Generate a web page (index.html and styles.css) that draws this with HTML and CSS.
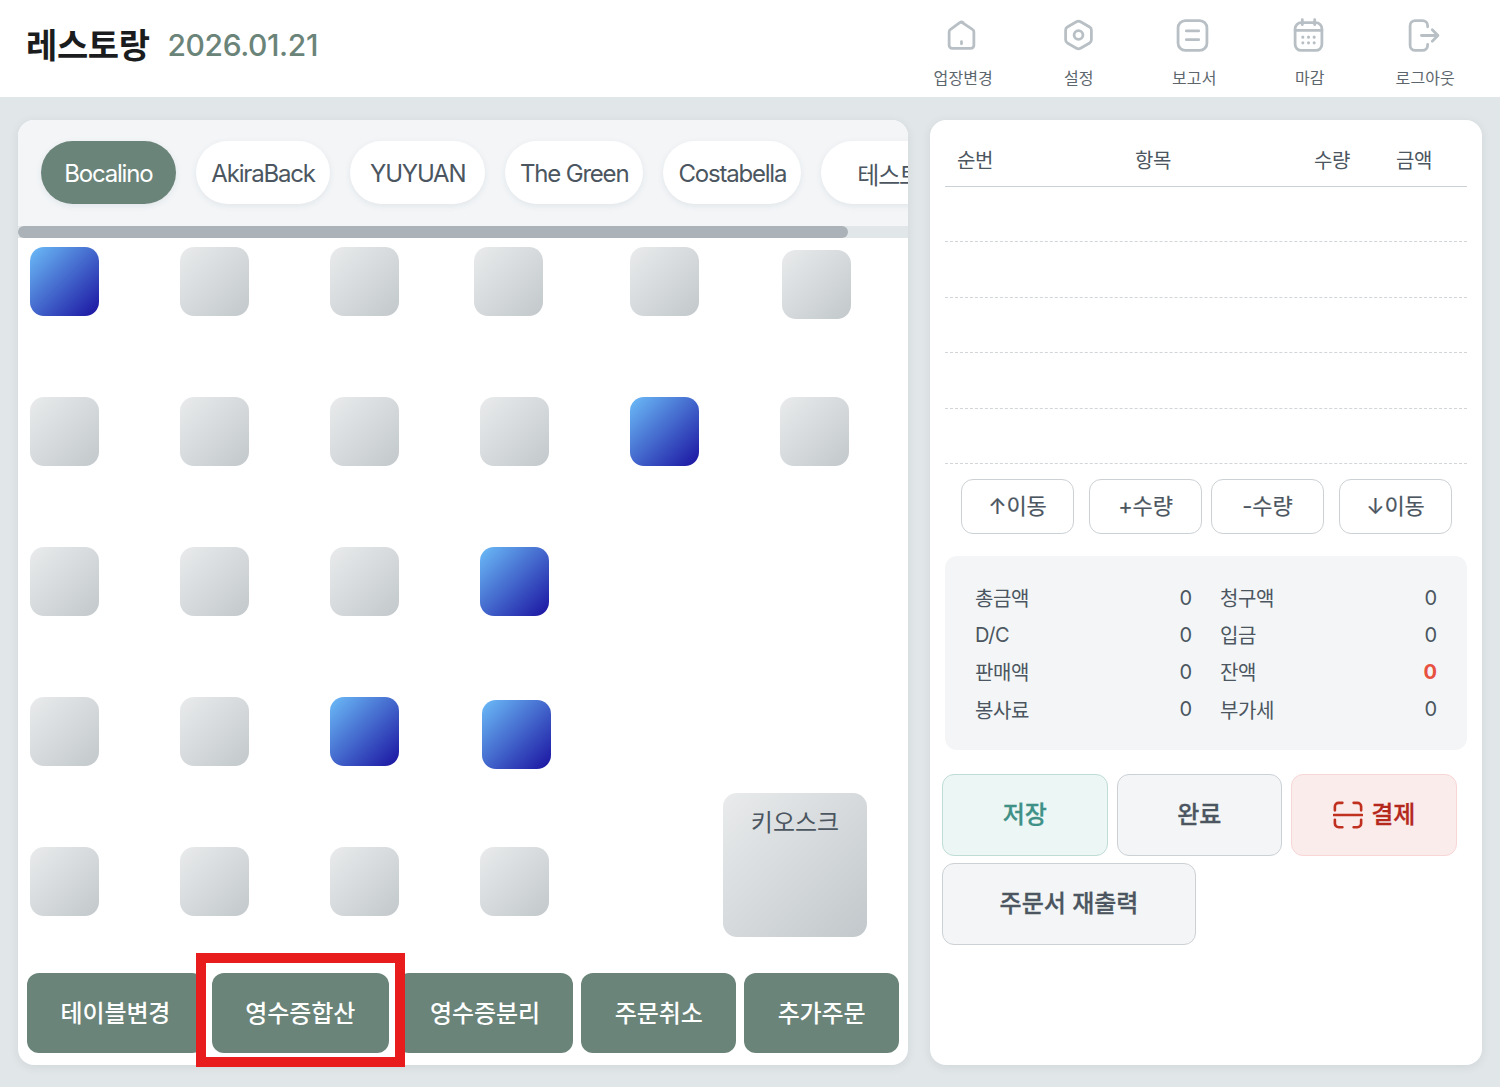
FILE: index.html
```html
<!DOCTYPE html>
<html lang="ko">
<head>
<meta charset="utf-8">
<title>레스토랑</title>
<link rel="stylesheet" href="styles.css">
</head>
<body>
<header class="top">
  <div class="brand"><span class="brand-name">레스토랑</span><span class="brand-date">2026.01.21</span></div>
  <nav class="nav">
    <a class="nav-item"><svg class="nav-icon" viewBox="0 0 32 32"><path d="M16 3.5 26.6 10.6a3 3 0 0 1 1.4 2.5V26a3 3 0 0 1-3 3H7a3 3 0 0 1-3-3V13.100a3 3 0 0 1 1.400-2.500L14.300 4a3 3 0 0 1 3.400 0"/><path d="M16 22.500v2"/></svg><span>업장변경</span></a>
    <a class="nav-item"><svg class="nav-icon nav-icon-hex" viewBox="0 0 32 32"><path d="M14 3.200a4 4 0 0 1 4 0l8.800 5.100a3.500 3.500 0 0 1 1.700 3v9.400a3.500 3.500 0 0 1-1.700 3L18 28.800a4 4 0 0 1-4 0l-8.800-5.100a3.500 3.500 0 0 1-1.700-3v-9.400a3.500 3.500 0 0 1 1.700-3z"/><circle cx="16" cy="16" r="4.300"/></svg><span>설정</span></a>
    <a class="nav-item"><svg class="nav-icon" viewBox="0 0 32 32"><rect x="2" y="2" width="28" height="29" rx="7"/><path d="M10 12h12M10 20.500h12"/></svg><span>보고서</span></a>
    <a class="nav-item"><svg class="nav-icon" viewBox="0 0 32 32"><rect x="3" y="4" width="26" height="27" rx="6"/><path d="M3 11.500h26M10 1v5M22 1v5"/><path class="dots" d="M10.500 18v.1M16 18v.1M21.500 18v.1M10.500 23.500v.1M16 23.500v.1M21.500 23.500v.1"/></svg><span>마감</span></a>
    <a class="nav-item"><svg class="nav-icon" viewBox="0 0 32 32"><path d="M20 8V7a5 5 0 0 0-5-5H8a5 5 0 0 0-5 5v19a5 5 0 0 0 5 5h7a5 5 0 0 0 5-5v-1"/><path d="M14 16.500h16M24.500 11l5.500 5.500-5.500 5.500"/></svg><span>로그아웃</span></a>
  </nav>
</header>

<main class="main">
  <section class="left">
    <div class="tabs">
      <div class="tab-list">
        <button class="tab tab-on">Bocalino</button>
        <button class="tab">AkiraBack</button>
        <button class="tab">YUYUAN</button>
        <button class="tab">The Green</button>
        <button class="tab">Costabella</button>
        <button class="tab">테스트</button>
      </div>
      <div class="track"><div class="thumb"></div></div>
    </div>
    <div class="floor">
      <div class="tile tile-on" style="left:12px;top:9px"></div>
      <div class="tile" style="left:162px;top:9px"></div>
      <div class="tile" style="left:312px;top:9px"></div>
      <div class="tile" style="left:456px;top:9px"></div>
      <div class="tile" style="left:612px;top:9px"></div>
      <div class="tile" style="left:764px;top:12px"></div>
      <div class="tile" style="left:12px;top:159px"></div>
      <div class="tile" style="left:162px;top:159px"></div>
      <div class="tile" style="left:312px;top:159px"></div>
      <div class="tile" style="left:462px;top:159px"></div>
      <div class="tile tile-on" style="left:612px;top:159px"></div>
      <div class="tile" style="left:762px;top:159px"></div>
      <div class="tile" style="left:12px;top:309px"></div>
      <div class="tile" style="left:162px;top:309px"></div>
      <div class="tile" style="left:312px;top:309px"></div>
      <div class="tile tile-on" style="left:462px;top:309px"></div>
      <div class="tile" style="left:12px;top:459px"></div>
      <div class="tile" style="left:162px;top:459px"></div>
      <div class="tile tile-on" style="left:312px;top:459px"></div>
      <div class="tile tile-on" style="left:464px;top:462px"></div>
      <div class="tile" style="left:12px;top:609px"></div>
      <div class="tile" style="left:162px;top:609px"></div>
      <div class="tile" style="left:312px;top:609px"></div>
      <div class="tile" style="left:462px;top:609px"></div>
      <div class="tile tile-kiosk" style="left:705px;top:555px">키오스크</div>
    </div>
    <div class="ops">
      <button class="op op-wide">테이블변경</button>
      <button class="op op-wide">영수증합산</button>
      <button class="op op-wide">영수증분리</button>
      <button class="op">주문취소</button>
      <button class="op">추가주문</button>
    </div>
    <div class="highlight"></div>
  </section>

  <section class="right">
    <div class="order-head">
      <span class="col col-no">순번</span>
      <span class="col col-name">항목</span>
      <span class="col col-qty">수량</span>
      <span class="col col-amt">금액</span>
    </div>
    <div class="order-rows">
      <div class="order-row"></div>
      <div class="order-row"></div>
      <div class="order-row"></div>
      <div class="order-row"></div>
      <div class="order-row"></div>
    </div>
    <div class="steps">
      <div class="step-group">
        <button class="step">↑이동</button>
        <button class="step">+수량</button>
      </div>
      <div class="step-group">
        <button class="step">-수량</button>
        <button class="step">↓이동</button>
      </div>
    </div>
    <div class="summary">
      <div class="sum-cell"><span class="sum-label">총금액</span><span>0</span></div>
      <div class="sum-cell"><span class="sum-label">청구액</span><span>0</span></div>
      <div class="sum-cell"><span class="sum-label">D/C</span><span>0</span></div>
      <div class="sum-cell"><span class="sum-label">입금</span><span>0</span></div>
      <div class="sum-cell"><span class="sum-label">판매액</span><span>0</span></div>
      <div class="sum-cell"><span class="sum-label">잔액</span><span class="sum-alert">0</span></div>
      <div class="sum-cell"><span class="sum-label">봉사료</span><span>0</span></div>
      <div class="sum-cell"><span class="sum-label">부가세</span><span>0</span></div>
    </div>
    <div class="actions">
      <button class="act act-save">저장</button>
      <button class="act">완료</button>
      <button class="act act-pay"><svg class="pay-icon" viewBox="0 0 32 32"><path d="M2 11V7a4 4 0 0 1 4-4h4M22 3h4a4 4 0 0 1 4 4v4M2 21v4a4 4 0 0 0 4 4h4M22 29h4a4 4 0 0 0 4-4v-4M1 16h30"/></svg>결제</button>
      <button class="act act-print">주문서 재출력</button>
    </div>
  </section>
</main>
</body>
</html>
```

FILE: styles.css
```css
* { box-sizing: border-box; }
html, body { margin: 0; height: 100%; }
body {
  width: 1500px;
  height: 1087px;
  overflow: hidden;
  background: #e1e6e8;
  font-family: "Inter", "Noto Sans CJK KR", sans-serif;
  color: #4b5660;
  display: flex;
  flex-direction: column;
}
button { font-family: inherit; cursor: pointer; }

.top {
  height: 97px;
  flex: none;
  background: #fff;
  display: flex;
  justify-content: space-between;
  padding-left: 26px;
}
.brand { display: flex; align-items: center; gap: 18px; height: 90px; }
.brand-name { font-size: 34px; font-weight: 700; color: #1a1c1e; letter-spacing: -.4px; margin-top: -3px; }
.brand-date { font-size: 30px; font-weight: 500; color: #6b8479; letter-spacing: -.4px; }
.nav { display: flex; padding-right: 17px; }
.nav-item {
  width: 115.500px;
  display: flex;
  flex-direction: column;
  align-items: center;
  padding-top: 18px;
  font-size: 16px;
  color: #5d666d;
  letter-spacing: .1px;
}
.nav-item span { margin-top: 14px; line-height: 24px; }
.nav-icon {
  width: 33px;
  height: 34px;
  margin-right: 3px;
  fill: none;
  stroke: #b8c0c5;
  stroke-width: 2.700;
  stroke-linecap: round;
  stroke-linejoin: round;
}
.nav-icon-hex { margin-right: 0; }
.nav-icon .dots { stroke-width: 3; }

.main {
  flex: 1;
  display: flex;
  gap: 22px;
  padding: 23px 18px 22px;
}
.left, .right {
  background: #fff;
  border-radius: 16px;
  box-shadow: 0 2px 8px rgba(90, 105, 115, .12);
}
.left {
  width: 890px;
  position: relative;
  display: flex;
  flex-direction: column;
}
.tabs {
  flex: none;
  width: 890px;
  background: #f3f5f7;
  border-radius: 16px 16px 0 0;
  overflow: hidden;
}
.tab-list {
  display: flex;
  gap: 20px;
  width: 954px;
  padding: 21px 0 22px 23px;
}
.track { height: 12px; background: #e1e6e8; }
.thumb { width: 830px; height: 12px; background: #abb2b8; border-radius: 6px; }
.tab {
  flex: none;
  min-width: 134.700px;
  height: 63px;
  padding: 2px 15px 0;
  border: 0;
  border-radius: 32px;
  background: #fff;
  color: #4b5660;
  font-size: 24px;
  letter-spacing: -1.200px;
  box-shadow: 0 2px 6px rgba(90, 105, 115, .1);
}
.tab-on { background: #6b8479; color: #fff; }

.floor { flex: 1; position: relative; }
.tile {
  position: absolute;
  width: 69px;
  height: 69px;
  border-radius: 14px;
  background: linear-gradient(135deg, #e9ebec, #c2c8cb);
}
.tile-on { background: linear-gradient(135deg, #6cbcf8, #1a12a0); }
.tile-kiosk {
  width: 144px;
  height: 144px;
  padding-top: 12px;
  text-align: center;
  font-size: 24px;
  line-height: 36px;
  color: #4b5660;
}

.ops {
  flex: none;
  display: flex;
  gap: 8px;
  padding: 0 9px 12px;
}
.op {
  width: 155px;
  height: 80px;
  padding: 0 0 4px;
  border: 0;
  border-radius: 12px;
  background: #6b8479;
  color: #fff;
  font-size: 24px;
  font-weight: 500;
  letter-spacing: -.1px;
}
.op-wide { width: 177px; }
.highlight {
  position: absolute;
  left: 178px;
  top: 833px;
  width: 209px;
  height: 114px;
  border: 10px solid #e81c1c;
}

.right {
  width: 552px;
  padding: 0 15px;
  display: flex;
  flex-direction: column;
}
.order-head {
  height: 67px;
  padding-top: 12px;
  display: flex;
  align-items: center;
  border-bottom: 1px solid #ccd1d5;
  font-size: 20px;
  color: #4b5660;
  letter-spacing: -.4px;
}
.col { flex: none; }
.col-no { width: 190px; padding-left: 12px; }
.col-name { width: 179px; }
.col-qty { width: 82px; }
.order-row { height: 55.400px; border-bottom: 1px dashed #d2d6d9; }
.steps {
  display: flex;
  gap: 9px;
  margin-top: 15px;
  padding-left: 16px;
}
.step-group { display: flex; gap: 15px; }
.step {
  width: 113px;
  height: 55px;
  padding: 0 0 4px;
  background: #fff;
  border: 1px solid #ccd1d5;
  border-radius: 12px;
  color: #4b5660;
  font-size: 22px;
  letter-spacing: -.1px;
  -webkit-text-stroke: .2px currentColor;
}
.summary {
  margin-top: 22px;
  height: 194px;
  background: #f3f5f7;
  border-radius: 12px;
  padding: 23px 30px 0;
  display: grid;
  grid-template-columns: 217px 217px;
  column-gap: 28px;
  grid-auto-rows: 37.200px;
  align-items: center;
  font-size: 20px;
  color: #4b5660;
}
.sum-cell { display: flex; justify-content: space-between; align-items: center; }
.sum-label { letter-spacing: -.4px; white-space: nowrap; }
.sum-alert { color: #e8503f; font-weight: 700; }
.actions {
  margin: 24px 0 0 -3px;
  width: 530px;
  display: flex;
  flex-wrap: wrap;
  gap: 7px 9px;
}
.act {
  width: 165.500px;
  height: 82px;
  padding: 0 0 4px;
  background: #f3f5f7;
  border: 1px solid #ccd1d5;
  border-radius: 12px;
  color: #4b5660;
  font-size: 24px;
  font-weight: 500;
  letter-spacing: 0;
  -webkit-text-stroke: .3px currentColor;
  display: flex;
  align-items: center;
  justify-content: center;
}
.act-save { background: #ecf6f4; border-color: #bfdcd6; color: #3f9187; }
.act-pay { background: #fbecec; border-color: #f9d6d6; color: #b4281e; }
.act-print { width: 254px; }
.pay-icon {
  width: 30px;
  height: 30px;
  margin: 4px 8px 0 1px;
  fill: none;
  stroke: #c0301f;
  stroke-width: 2.800;
  stroke-linecap: round;
}
```
